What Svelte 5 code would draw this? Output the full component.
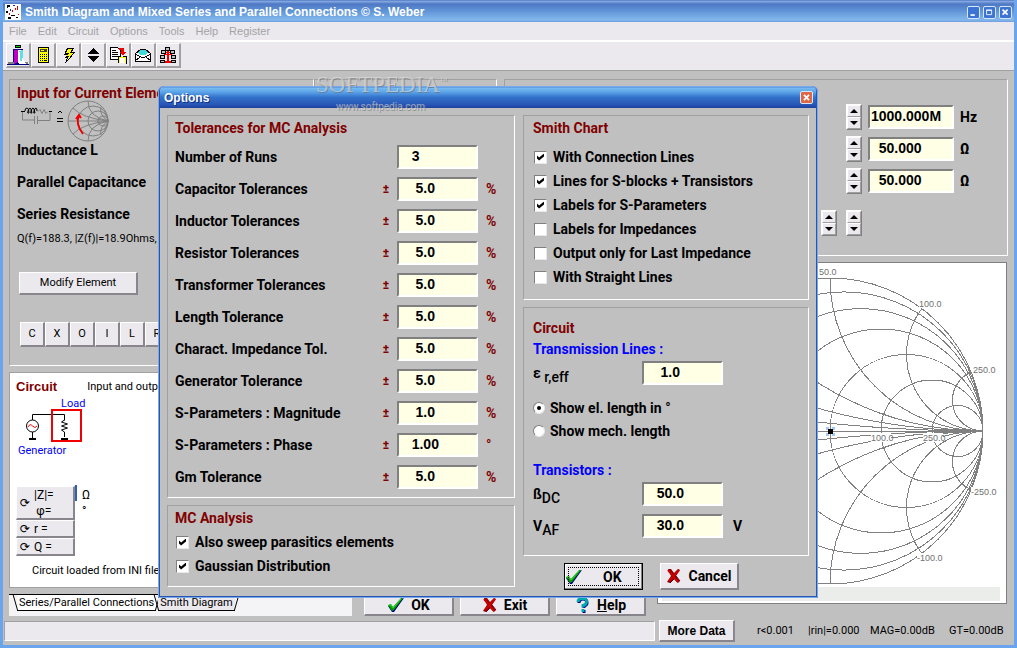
<script>
  const menus = ['File', 'Edit', 'Circuit', 'Options', 'Tools', 'Help', 'Register'];
  const tools = ['Exit', 'Calculator', 'Run', 'Up or down', 'Copy', 'Mail', 'Network'];
  const elements = ['C', 'X', 'O', 'I', 'L', 'R', 'T', 'S'];

  let tolerances = $state([
    { label: 'Number of Runs', value: '   3', sign: '', unit: '' },
    { label: 'Capacitor Tolerances', value: '    5.0', sign: '±', unit: '%' },
    { label: 'Inductor Tolerances', value: '    5.0', sign: '±', unit: '%' },
    { label: 'Resistor Tolerances', value: '    5.0', sign: '±', unit: '%' },
    { label: 'Transformer Tolerances', value: '    5.0', sign: '±', unit: '%' },
    { label: 'Length Tolerance', value: '    5.0', sign: '±', unit: '%' },
    { label: 'Charact. Impedance Tol.', value: '    5.0', sign: '±', unit: '%' },
    { label: 'Generator Tolerance', value: '    5.0', sign: '±', unit: '%' },
    { label: 'S-Parameters : Magnitude', value: '    1.0', sign: '±', unit: '%' },
    { label: 'S-Parameters : Phase', value: '   1.00', sign: '±', unit: '°' },
    { label: 'Gm Tolerance', value: '    5.0', sign: '±', unit: '%' }
  ]);

  let mcOptions = $state([
    { label: 'Also sweep parasitics elements', checked: true },
    { label: 'Gaussian Distribution', checked: true }
  ]);

  let chartOptions = $state([
    { label: 'With Connection Lines', checked: true },
    { label: 'Lines for S-blocks + Transistors', checked: true },
    { label: 'Labels for S-Parameters', checked: true },
    { label: 'Labels for Impedances', checked: false },
    { label: 'Output only for Last Impedance', checked: false },
    { label: 'With Straight Lines', checked: false }
  ]);

  let lengthMode = $state('el');

  let sources = $state([
    { name: 'Frequency', value: '1000.000M', unit: 'Hz' },
    { name: 'Source impedance', value: '  50.000', unit: 'Ω' },
    { name: 'Load impedance', value: '  50.000', unit: 'Ω' }
  ]);

  // Smith chart geometry
  const cx = 172;
  const cy = 168;
  const R = 153;
  const steps = [0.1, 0.25, 0.5, 1, 2, 5];

  function reactance(x, side) {
    const d = x * x + 1;
    const px = cx + (R * (x * x - 1)) / d;
    const py = cy - (side * R * 2 * x) / d;
    const r = R / x;
    return `M${cx + R} ${cy}A${r} ${r} 0 0 ${side > 0 ? 1 : 0} ${px} ${py}`;
  }

  const chartLabels = [
    { x: 161, y: 12, text: '50.0' },
    { x: 261, y: 44, text: '100.0' },
    { x: 315, y: 110, text: '250.0' },
    { x: 313, y: 232, text: '-250.0' },
    { x: 259, y: 298, text: '-100.0' },
    { x: 213, y: 178, text: '100.0' },
    { x: 265, y: 178, text: '250.0' }
  ];
</script>

{#snippet tick()}
  <svg class="glyph" width="18" height="16" viewBox="0 0 18 16" aria-hidden="true">
    <path d="M1 9L4 8L6 11L14 2L17 1L7 15L5 15Z" fill="#000080" />
    <path d="M1 8L4 7L6 10L14 1L16 1L7 13L5 14Z" fill="#00a000" />
    <path d="M2 8L4 8L6 11L14 2" fill="none" stroke="#30d830" />
  </svg>
{/snippet}

{#snippet cross()}
  <svg class="glyph" width="16" height="16" viewBox="0 0 16 16" aria-hidden="true">
    <path d="M2 1L5 1L8 5L12 1L14 2L10 8L14 13L12 15L8 11L4 15L1 14L5 8Z" fill="#900000" />
    <path d="M2 2L12 14M13 2L3 13" fill="none" stroke="#c80000" stroke-width="2" />
    <path d="M10 8L14 13M4 15L8 11" fill="none" stroke="#600020" />
  </svg>
{/snippet}

{#snippet spin(name)}
  <span class="spin">
    <button aria-label="{name} up"><i class="up"></i></button>
    <button aria-label="{name} down"><i class="down"></i></button>
  </span>
{/snippet}

<div class="window">
  <header class="titlebar">
    <svg width="16" height="16" viewBox="0 0 16 16" aria-hidden="true">
      <path d="M0 0h16v16h-16z" fill="#fff" />
      <path d="M2 1h3v2h-2v1h-1zM1 7h2v2h-2zM6 11h4v1h-4zM3 13h3v2h-3zM11 13h2v1h-2z" fill="#000" />
      <path d="M12 2h1v4h-1zM10 4h1v2h-1zM7 6h1v2h-1zM4 9h1v2h-1zM13 10h1v1h-1z" fill="#e00000" />
      <path d="M8 1h2v1h-2zM5 5h1v2h-1z" fill="#2020c0" />
    </svg>
    <h1>Smith Diagram and Mixed Series and Parallel Connections © S. Weber</h1>
    <div class="controls">
      <button aria-label="Minimize"><svg viewBox="0 0 13 13"><path d="M3 9.500h5" stroke="#fff" stroke-width="2" /></svg></button>
      <button aria-label="Maximize"><svg viewBox="0 0 13 13"><path d="M3 3.500h6v5.500h-6zM3 4h6" fill="none" stroke="#fff" /></svg></button>
      <button aria-label="Close"><svg viewBox="0 0 13 13"><path d="M3 3l6 6M9 3l-6 6" stroke="#fff" stroke-width="2" /></svg></button>
    </div>
  </header>

  <nav class="menubar">
    {#each menus as menu}
      <button>{menu}</button>
    {/each}
  </nav>

  <div class="toolbar">
    {#each tools as tool}
      <button aria-label={tool}>
        <svg width="22" height="20" viewBox="0 0 22 20" shape-rendering="crispEdges">
          {#if tool === 'Exit'}
            <path d="M8 0h6v3h-6z" fill="#000" /><path d="M9 1h4v1h-4z" fill="#00d000" />
            <path d="M6 4h10v15h-10z" fill="#000080" /><path d="M7 5h4v12l-4 2z" fill="#c000c0" />
            <path d="M11 5h5v13h-5z" fill="#fff" /><path d="M12 6h1v10h1v-11h1v8" stroke="#60e0e0" fill="none" />
            <path d="M1 17h6v2h-6zM17 17h4v2h-4z" fill="#808080" /><path d="M12 17l5 -2l2 4h-7z" fill="#fff" />
            <path d="M0 19h22" stroke="#000080" />
          {:else if tool === 'Calculator'}
            <path d="M6 2h11v16h-11z" fill="#000" /><path d="M7 3h9v14h-9z" fill="#ffff00" />
            <path d="M8 4h7v3h-7z" fill="#404040" /><path d="M9 5h3v1h-3z" fill="#ffff00" />
            <path d="M8 9h1v1h-1zM10 9h1v1h-1zM12 9h1v1h-1zM14 9h1v1h-1zM8 11h1v1h-1zM10 11h1v1h-1zM12 11h1v1h-1zM14 11h1v1h-1zM8 13h1v1h-1zM10 13h1v1h-1zM12 13h1v1h-1zM14 13h1v1h-1zM8 15h1v1h-1zM10 15h1v1h-1zM12 15h3v1h-3z" fill="#000" />
          {:else if tool === 'Run'}
            <path d="M10 3h7l-2 4h3l-3 4h1l-8 7l2 -5h-2l2 -3h-3z" fill="#000" />
            <path d="M11 4h4l-2 4h3l-3 4l-3 3l2 -4h-2l2 -3h-3z" fill="#ffff00" />
          {:else if tool === 'Up or down'}
            <path d="M11 3l6 6h-12zM5 11h12l-6 6z" fill="#000" />
          {:else if tool === 'Copy'}
            <path d="M3.500 2.500h7l3 3v9h-10z" fill="#fff" stroke="#000" />
            <path d="M5 5h4M5 7h6M5 9h6M5 11h6" stroke="#000" />
            <path d="M12 3h5v4h2l-3 4l-3 -4h1v-2h-2z" fill="#f00000" />
            <path d="M11 12h8v6h-8z" fill="#ffff00" /><path d="M13 13h5v5h-5z" fill="#fff" /><path d="M11.500 11v7M11 11.500h2M16 11.500h3v7" fill="none" stroke="#000" />
          {:else if tool === 'Mail'}
            <path d="M3.500 8.500l5 -4h5l5 4v8h-15z" fill="#fff" stroke="#000" />
            <path d="M6 7l3 -2h4l3 2l-2 3h-6z" fill="#40d8d8" /><path d="M3 9l6 3h4l6 -3M3 16l5 -4M19 16l-5 -4" fill="none" stroke="#000" />
          {:else}
            <path d="M10 5h2v12h-2zM7 9h8v1h-8zM8 16h6v2h-6zM9 7h4v1h-4z" fill="#f00000" />
            <path d="M8.500 2.500h4v3h-4zM4.500 5.500h4v3h-4zM13.500 5.500h4v3h-4zM3.500 10.500h4v3h-4zM14.500 10.500h4v3h-4zM3.500 15.500h4v2h-4zM14.500 15.500h4v2h-4z" fill="#c0c0c0" stroke="#000" />
          {/if}
        </svg>
      </button>
    {/each}
  </div>

  <main class="workspace">
    <section class="panel element">
      <h2>Input for Current Element</h2>
      <svg class="sketch" width="100" height="31" viewBox="0 0 100 31" aria-hidden="true">
        <g fill="none" stroke="#000">
          <path d="M4 8.500h4M32 8.500h3" />
          <path d="M8 8q0-3 2-3t2 5q-2 1-1-2t2-3t2 5q-2 1-1-2t2-3t2 5q-2 1-1-2t2-3t1 3" />
          <path d="M41 10l2-2l2 2M40 15.500h6M40 18.500h6" />
        </g>
        <path d="M21 8.500l2-2l2 4l2-4l2 4l2-2M5.500 9v8h12M17.500 13v8M20.500 13v8M21 17.500h12v-8" fill="none" stroke="#808080" />
        <g fill="none" stroke="#808080">
          <circle cx="71" cy="18" r="20" />
          <circle cx="76" cy="18" r="15" /><circle cx="81" cy="18" r="10" /><circle cx="86" cy="18" r="5" />
          <path d="M51 18h40M91 18Q71 14 71 -2M91 18Q71 22 71 38M91 18Q82 12 84 4M91 18Q82 24 84 32M91 18Q65 15 56 5M91 18Q65 21 56 31" />
        </g>
        <path d="M62 12q-4 9 4 19M59 16l3-4l2 3" fill="none" stroke="#f00000" stroke-width="2" />
      </svg>
      <p class="param">Inductance L</p>
      <p class="param">Parallel Capacitance</p>
      <p class="param">Series Resistance</p>
      <p class="small quality">Q(f)=188.3, |Z(f)|=18.9Ohms, f</p>
      <button class="btn small modify">Modify Element</button>
      <div class="letters">
        {#each elements as el}
          <button class="btn small">{el}</button>
        {/each}
      </div>
    </section>

    <section class="panel middle"></section>

    <section class="panel source">
      {#each sources as s}
        <div class="source-row">
          {@render spin(s.name)}
          <input class="field" aria-label={s.name} bind:value={s.value} />
          <span>{s.unit}</span>
        </div>
      {/each}
      <div class="source-row extra">
        {@render spin('Coarse')}
        {@render spin('Fine')}
      </div>
    </section>

    <section class="chart">
      <svg viewBox="0 0 348 324" role="img" aria-label="Smith chart">
        <g fill="none" stroke="#808080" shape-rendering="crispEdges">
          <circle {cx} {cy} r={R} />
          <path d="M{cx - R} {cy}h{2 * R}" />
          {#each steps as s}
            <circle cx={cx + R - R / (1 + s)} {cy} r={R / (1 + s)} />
            <path d={reactance(s, 1)} />
            <path d={reactance(s, -1)} />
          {/each}
        </g>
        {#each chartLabels as l}
          <rect x={l.x} y={l.y - 8} width={l.text.length * 4} height="9" fill="#fff" />
          <text x={l.x} y={l.y}>{l.text}</text>
        {/each}
        <path d="M168 164h3v2h3v-2h3v3h-2v3h2v3h-3v-2h-3v2h-3v-3h2v-3h-2z" fill="#a0c8f8" />
        <path d="M170 166h5v5h-5z" fill="#000" />
      </svg>
      <div class="band"></div>
    </section>

    <section class="circuit small">
      <div class="circuit-head">
        <h2>Circuit</h2>
        <span>Input and output</span>
      </div>
      <svg class="schematic" width="84" height="62" viewBox="0 0 84 62" role="img" aria-label="Generator and load">
        <text x="51" y="12">Load</text>
        <text x="8" y="59">Generator</text>
        <g fill="none" stroke="#000">
          <circle cx="22.500" cy="31" r="6" />
          <path d="M22.500 25v-5.500h32v6M54.500 25l-3 2l6 2l-6 2l6 2l-6 2l3 2v5M22.500 37v6" />
          <path d="M19 44h7M51 44h7" stroke-width="2" />
        </g>
        <path d="M18 32q2-4 4.500-1t4.500 0" fill="none" stroke="#f00000" />
        <path d="M42 15h29v31h-29z" fill="none" stroke="#f00000" stroke-width="2" />
      </svg>
      <div class="impedance">
        <div class="quantities">
          <button class="btn tall"><b>⟳</b><span>|Z|=<br />φ=</span></button>
          <button class="btn"><b>⟳</b><span>r =</span></button>
          <button class="btn"><b>⟳</b><span>Q =</span></button>
        </div>
        <div class="marker"></div>
        <div class="units">Ω<br />°</div>
      </div>
      <p>Circuit loaded from INI file</p>
    </section>

    <div class="actions">
      <div class="tabs small">
        <button class="active">Series/Parallel Connections</button>
        <button>Smith Diagram</button>
      </div>
      <button class="btn">{@render tick()}OK</button>
      <button class="btn">{@render cross()}Exit</button>
      <button class="btn">
        <svg class="glyph" width="16" height="16" viewBox="0 0 16 16" aria-hidden="true">
          <path d="M4 6Q4 2 8 2T12 6Q12 8 9 9V11M9 13v3" fill="none" stroke="#000080" stroke-width="3" />
          <path d="M3 5Q3 1.500 7.500 1.500T11.500 5Q11 8 8 8.500V10.500M8 12v3" fill="none" stroke="#00a8b0" stroke-width="3" />
        </svg>
        <span><u>H</u>elp</span>
      </button>
    </div>
  </main>

  <footer class="status small">
    <div class="message"></div>
    <button class="btn">More Data</button>
    <span>r&lt;0.001</span>
    <span>|rin|=0.000</span>
    <span>MAG=0.00dB</span>
    <span>GT=0.00dB</span>
  </footer>

  <div class="dialog" role="dialog" aria-labelledby="options-title">
    <header>
      <h2 id="options-title">Options</h2>
      <button aria-label="Close"><svg viewBox="0 0 13 13"><path d="M3.500 3.500l6 6M9.500 3.500l-6 6" stroke="#fff" stroke-width="2" /></svg></button>
    </header>
    <form class="dialog-body" onsubmit={(e) => e.preventDefault()}>
      <div class="column">
        <section class="panel tolerances">
          <h2>Tolerances for MC Analysis</h2>
          {#each tolerances as t, i}
            <div class="tolerance">
              <label for="tol-{i}">{t.label}</label>
              <span class="sign">{t.sign}</span>
              <input class="field" id="tol-{i}" bind:value={t.value} />
              <span class="unit">{t.unit}</span>
            </div>
          {/each}
        </section>
        <section class="panel mc">
          <h2>MC Analysis</h2>
          {#each mcOptions as o}
            <label class="option"><input type="checkbox" bind:checked={o.checked} />{o.label}</label>
          {/each}
        </section>
      </div>

      <div class="column">
        <section class="panel smith">
          <h2>Smith Chart</h2>
          {#each chartOptions as o}
            <label class="option"><input type="checkbox" bind:checked={o.checked} />{o.label}</label>
          {/each}
        </section>
        <section class="panel lines">
          <h2>Circuit</h2>
          <h3>Transmission Lines :</h3>
          <div class="constant">
            <label for="eps">ε <sub>r,eff</sub></label>
            <input class="field" id="eps" value="    1.0" />
          </div>
          <div class="radios">
            <label class="option"><input type="radio" name="length" value="el" bind:group={lengthMode} />Show el. length in °</label>
            <label class="option"><input type="radio" name="length" value="mech" bind:group={lengthMode} />Show mech. length</label>
          </div>
          <h3>Transistors :</h3>
          <div class="constant">
            <label for="beta">ß<sub>DC</sub></label>
            <input class="field" id="beta" value="   50.0" />
          </div>
          <div class="constant">
            <label for="vaf">V<sub>AF</sub></label>
            <input class="field" id="vaf" value="   30.0" />
            <span>V</span>
          </div>
        </section>
        <div class="buttons">
          <button class="btn default">{@render tick()}<span>OK</span></button>
          <button class="btn" type="button">{@render cross()}Cancel</button>
        </div>
      </div>
    </form>
  </div>

  <div class="watermark" aria-hidden="true">
    <span>SOFTPEDIA</span><sup>™</sup>
    <small>www.softpedia.com</small>
  </div>
</div>

<style>
  :global(body) {
    margin: 0;
    background: #c0c0c0;
  }

  .window {
    position: relative;
    box-sizing: border-box;
    min-height: 100vh;
    display: flex;
    flex-direction: column;
    background: #c0c0c0;
    border: 3px solid #6aa4ec;
    border-top: 0;
    font: bold 14px/16px Roboto, "Liberation Sans", sans-serif;
    color: #000;
  }

  h1, h2, h3, p {
    margin: 0;
    font-size: inherit;
  }

  h2 {
    color: #800000;
  }

  h3 {
    color: #0000ff;
  }

  button, input {
    box-sizing: border-box;
    margin: 0;
    padding: 0;
    font: inherit;
    color: inherit;
  }

  .small {
    font: 11px/16px Roboto, "Liberation Sans", sans-serif;
  }

  .titlebar {
    display: flex;
    align-items: center;
    gap: 4px;
    height: 22px;
    padding: 2px 2px 0;
    box-sizing: border-box;
    background: linear-gradient(#3a62b8 0, #8aaee4 1px, #4f78c4 4px, #5c90d4 10px, #84b8ec 20px, #6c9cdc 22px);
    color: #fff;
  }

  .titlebar h1 {
    flex: 1;
    font: bold 12px/16px "Liberation Sans", Arial, sans-serif;
  }

  .controls {
    display: flex;
    gap: 3px;
  }

  .controls button,
  .dialog header button {
    width: 13px;
    height: 13px;
    border: 1px solid #d8e8fc;
    border-radius: 2px;
    background: #3c74d4;
  }

  .controls svg,
  .dialog header svg {
    display: block;
    width: 11px;
    height: 11px;
  }

  .menubar {
    display: flex;
    gap: 11px;
    height: 18px;
    padding: 0 6px;
    background: #ebe9ed;
    border-bottom: 2px solid #fff;
  }

  .menubar button {
    border: 0;
    background: none;
    color: #a4a2a6;
    font: 11px/16px "Liberation Sans", Arial, sans-serif;
  }

  .toolbar {
    display: flex;
    height: 27px;
    padding: 1px 3px 0;
    background: #ebe9ed;
    border-bottom: 1px solid #a0a0a0;
  }

  .toolbar button {
    width: 25px;
    height: 25px;
    border: 1px solid #fff;
    border-right: 2px solid #a0a0a0;
    border-bottom: 2px solid #a0a0a0;
    background: #ebe9ed;
  }

  .toolbar svg {
    display: block;
  }

  .panel {
    border: 1px solid #a0a0a0;
    border-right-color: #fff;
    border-bottom-color: #fff;
    padding: 0 7px;
  }

  .btn {
    display: flex;
    align-items: center;
    justify-content: center;
    gap: 6px;
    background: #ebe9ed;
    border: 1px solid #fff;
    border-right: 2px solid #88868c;
    border-bottom: 2px solid #88868c;
    white-space: nowrap;
  }

  .glyph {
    flex: none;
  }

  .field {
    height: 24px;
    padding: 0 1px 2px;
    background: #ffffe6;
    border: 2px solid #808080;
    border-right-color: #fff;
    border-bottom-color: #fff;
    border-radius: 0;
    font: bold 14px "Liberation Sans", Arial, sans-serif;
  }

  .workspace {
    flex: 1;
    display: grid;
    grid-template-columns: 305px 183px 7px 153px 1fr;
    grid-template-rows: 177px 104px 1fr 22px;
    row-gap: 6px;
    padding: 8px 6px 0;
  }

  .element {
    grid-area: 1 / 1 / 3 / 2;
    overflow: hidden;
  }

  .element h2 {
    padding: 5px 0 2px;
  }

  .sketch {
    display: block;
    overflow: visible;
  }

  .param {
    line-height: 32px;
  }

  .element .quality {
    padding: 1px 0 25px;
  }

  .modify {
    width: 119px;
    height: 23px;
    margin-left: 2px;
  }

  .letters {
    display: flex;
    margin: 27px 0 0 3px;
  }

  .letters .btn {
    width: 25px;
    height: 25px;
  }

  .middle {
    grid-area: 1 / 2 / 3 / 3;
  }

  .source {
    grid-area: 1 / 4 / 2 / 6;
    display: flex;
    flex-direction: column;
    padding: 21px 11px 0;
  }

  .source-row {
    display: grid;
    grid-template-columns: 16px 86px 36px;
    justify-content: end;
    align-items: center;
    column-gap: 6px;
    height: 32px;
  }

  .extra {
    grid-template-columns: 16px 16px;
    column-gap: 9px;
    height: 52px;
    padding-right: 134px;
  }

  .spin {
    display: flex;
    flex-direction: column;
    border: 1px solid #fff;
    border-right-color: #808080;
    border-bottom-color: #808080;
  }

  .spin button {
    display: flex;
    align-items: center;
    justify-content: center;
    height: 12px;
    background: #ebe9ed;
    border: 1px solid #fff;
    border-right-color: #a0a0a0;
    border-bottom-color: #a0a0a0;
  }

  .up, .down {
    width: 8px;
    height: 4px;
    background: #000;
    clip-path: polygon(50% 0, 100% 100%, 0 100%);
  }

  .down {
    clip-path: polygon(0 0, 100% 0, 50% 100%);
  }

  .chart {
    grid-area: 2 / 5 / 5 / 6;
    display: flex;
    flex-direction: column;
    margin: 0 1px 12px 0;
    border: 1px solid #808080;
    background: #fff;
  }

  .chart > svg {
    display: block;
    flex: 1;
    min-height: 0;
  }

  .chart text {
    font: 9px "Liberation Sans", Arial, sans-serif;
    fill: #707070;
  }

  .band {
    height: 14px;
    margin: 0 6px 2px 4px;
    background: #ebedea;
  }

  .circuit {
    grid-area: 3 / 1 / 4 / 5;
    margin-right: 8px;
    border: 1px solid #a0a0a0;
    background: #fff;
  }

  .circuit-head {
    display: flex;
    gap: 30px;
    padding: 6px 6px 0;
  }

  .circuit-head h2 {
    font: bold 13px/16px "Liberation Sans", Arial, sans-serif;
  }

  .schematic {
    display: block;
  }

  .schematic text {
    fill: #0000ff;
  }

  .impedance {
    display: flex;
    padding: 12px 0 0 6px;
  }

  .quantities {
    width: 59px;
    padding-top: 17px;
  }

  .quantities .btn {
    width: 100%;
    height: 18px;
    justify-content: flex-start;
    gap: 4px;
    padding-left: 3px;
    font-size: 12px;
  }

  .quantities .tall {
    height: 34px;
  }

  .quantities b {
    font: 12px "DejaVu Sans", sans-serif;
  }

  .marker {
    width: 2px;
    height: 16px;
    margin-top: 16px;
    background: #3060b0;
  }

  .units {
    padding: 18px 5px 0;
    font-size: 12px;
  }

  .circuit p {
    padding: 7px 22px 0;
  }

  .actions {
    grid-area: 4 / 1 / 5 / 5;
    display: flex;
    gap: 6px;
    padding-right: 11px;
  }

  .actions > .btn {
    width: 90px;
  }

  .tabs {
    flex: 1;
    display: flex;
    gap: 2px;
    margin-right: 6px;
    padding-left: 8px;
    background: #f4f3f5;
    border-top: 1px solid #000;
    box-sizing: border-box;
  }

  .tabs button {
    position: relative;
    height: 16px;
    padding: 0 2px;
    border: 0;
    border-bottom: 1px solid #000;
    background: #ebe9ed;
    line-height: 15px;
    white-space: nowrap;
  }

  .tabs .active {
    background: #fff;
  }

  .tabs button::before,
  .tabs button::after {
    content: "";
    position: absolute;
    top: 0;
    bottom: -1px;
    left: -2px;
    width: 1px;
    background: #000;
    transform: skewX(16deg);
  }

  .tabs button::after {
    left: auto;
    right: -2px;
    transform: skewX(-16deg);
  }

  .status {
    display: grid;
    grid-template-columns: minmax(0, 651px) 77px 51px 62px 79px 60px;
    align-items: center;
    height: 29px;
    box-sizing: border-box;
    padding: 1px 0 0 1px;
  }

  .message {
    height: 18px;
    border: 1px solid #fff;
    border-top-color: #a0a0a0;
    border-left-color: #a0a0a0;
    background: #ebe9ed;
  }

  .status .btn {
    height: 22px;
    margin-left: 4px;
    margin-right: -3px;
    font: bold 12px "Liberation Sans", Arial, sans-serif;
  }

  .status span {
    margin-left: 25px;
    margin-right: -25px;
    white-space: nowrap;
  }

  .dialog {
    position: absolute;
    top: 86px;
    left: 155px;
    width: 660px;
    box-sizing: border-box;
    border: 2px solid #2854b4;
    border-top: 0;
    border-radius: 6px 6px 0 0;
    outline: 1px solid #78a8ec;
    outline-offset: -1px;
    background: #c0c0c0;
    overflow: hidden;
  }

  .dialog header {
    display: flex;
    align-items: center;
    justify-content: space-between;
    height: 22px;
    padding: 0 3px 0 4px;
    background: linear-gradient(#2450b0 0, #78bcf0 2px, #5ca4e8 6px, #3474cc 11px, #2854b4 19px, #1c409c 22px);
  }

  .dialog header h2 {
    color: #fff;
    font: bold 12px/24px "Liberation Sans", Arial, sans-serif;
    padding-top: 1px;
    text-shadow: 1px 1px #103080;
  }

  .dialog header button {
    background: #dc6848;
  }

  .dialog-body {
    display: grid;
    grid-template-columns: 348px 286px;
    gap: 8px;
    padding: 7px 7px 6px;
  }

  .column {
    display: flex;
    flex-direction: column;
    gap: 7px;
  }

  .dialog .panel h2 {
    line-height: 25px;
  }

  .dialog .mc h2 {
    line-height: 24px;
  }

  .tolerances {
    padding-bottom: 4px;
  }

  .tolerance {
    display: grid;
    grid-template-columns: 1fr 22px 81px 29px;
    align-items: center;
    height: 32px;
  }

  .sign, .unit {
    color: #800000;
  }

  .sign {
    text-align: center;
    font-size: 12px;
  }

  .unit {
    padding-left: 8px;
  }

  .option {
    display: flex;
    align-items: center;
    gap: 6px;
    height: 24px;
  }

  .mc {
    padding-bottom: 8px;
  }

  .mc .option,
  .smith .option {
    padding-left: 1px;
  }

  .smith, .lines {
    padding-left: 9px;
  }

  .smith {
    padding-bottom: 10px;
  }

  .smith h2 {
    padding-bottom: 4px;
  }

  .lines {
    padding-top: 8px;
    padding-bottom: 13px;
  }

  .lines h3 {
    line-height: 16px;
  }

  input[type="checkbox"],
  input[type="radio"] {
    appearance: none;
    flex: none;
    width: 13px;
    height: 13px;
    background: #fff;
    border: 1px solid #808080;
    border-right-color: #e8e8e8;
    border-bottom-color: #e8e8e8;
  }

  input[type="radio"] {
    width: 12px;
    height: 12px;
    border-radius: 50%;
  }

  input[type="checkbox"]:checked::before {
    content: "";
    display: block;
    width: 7px;
    height: 7px;
    margin: 2px;
    background: #000;
    clip-path: polygon(0 28%, 30% 57%, 100% 0, 100% 43%, 30% 100%, 0 71%);
  }

  input[type="radio"]:checked::before {
    content: "";
    display: block;
    width: 4px;
    height: 4px;
    margin: 3px;
    border-radius: 50%;
    background: #000;
  }

  .constant {
    display: grid;
    grid-template-columns: 109px 81px 1fr;
    align-items: center;
    height: 32px;
  }

  .constant span {
    padding-left: 10px;
  }

  .constant sub {
    font-size: 14px;
    font-weight: 500;
    line-height: 0;
  }

  .radios {
    padding: 7px 0 20px;
  }

  .radios .option {
    height: 23px;
    gap: 5px;
  }

  .buttons {
    display: flex;
    gap: 17px;
    padding-left: 41px;
  }

  .buttons .btn {
    width: 79px;
    height: 27px;
  }

  .buttons .default {
    justify-content: flex-start;
    gap: 20px;
    border: 1px solid #000;
    box-shadow: inset -1px -1px #808080, inset 1px 1px #fff;
    outline: 1px dotted #000;
    outline-offset: -5px;
  }

  .watermark {
    position: absolute;
    top: 73px;
    left: 313px;
    width: 140px;
    color: rgba(225, 225, 225, 0.6);
    font: 23px/24px "Liberation Serif", serif;
    text-shadow: 1px 1px rgba(100, 100, 100, 0.5);
    pointer-events: none;
  }

  .watermark sup {
    font-size: 8px;
    line-height: 0;
  }

  .watermark small {
    display: block;
    padding-left: 20px;
    font: 10px/20px Roboto, "Liberation Sans", sans-serif;
  }
</style>
